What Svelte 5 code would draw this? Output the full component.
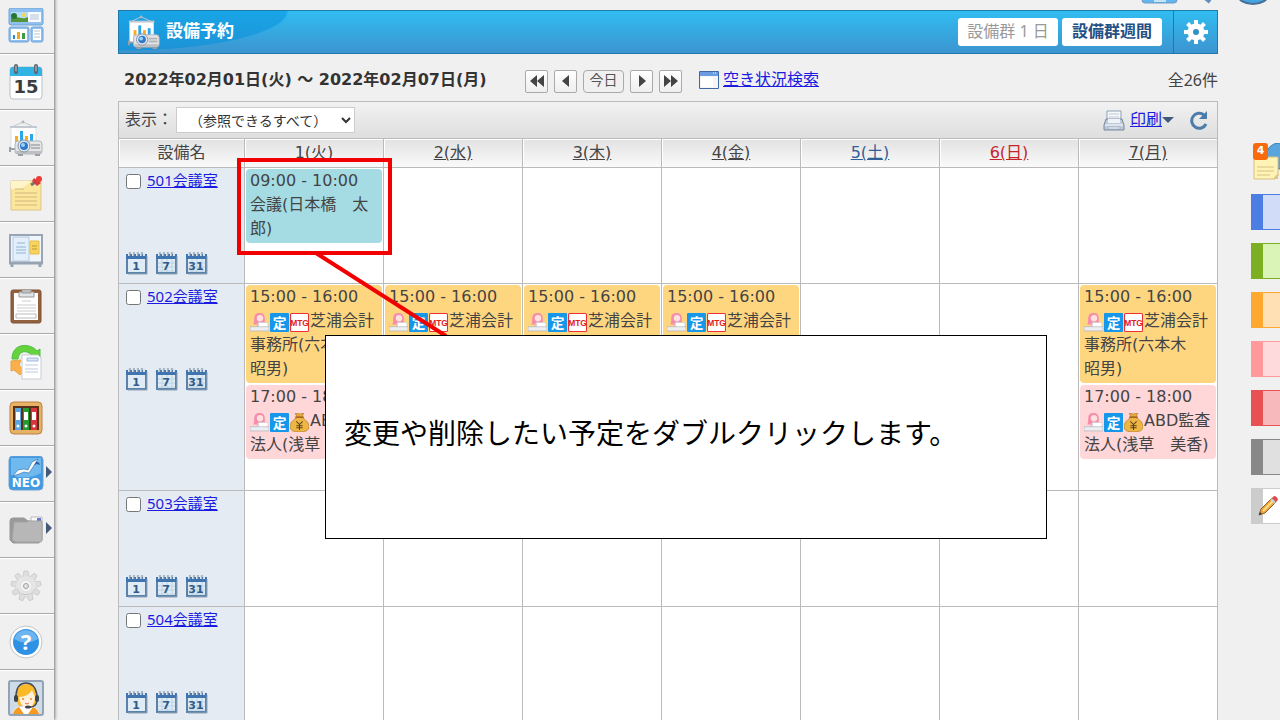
<script>
  const tools = ['portal', 'calendar', 'facility', 'memo', 'board', 'report', 'workflow', 'cabinet', 'neo', 'folder', 'settings', 'help', 'support'];
  const submenus = ['neo', 'folder'];
  const labels = {
    portal: 'ポータル', calendar: 'スケジュール', facility: '設備予約', memo: 'メモ', board: '掲示板', report: 'レポート',
    workflow: 'ワークフロー', cabinet: 'キャビネット', neo: 'NEO', folder: 'フォルダ', settings: '設定', help: 'ヘルプ', support: 'サポート'
  };

  const days = [
    { name: '1(火)' },
    { name: '2(水)' },
    { name: '3(木)' },
    { name: '4(金)' },
    { name: '5(土)', kind: 'saturday' },
    { name: '6(日)', kind: 'sunday' },
    { name: '7(月)' }
  ];

  const single = { time: '09:00 - 10:00', title: '会議(日本橋　太郎)', color: 'teal', icons: [] };
  const office = { time: '15:00 - 16:00', title: '芝浦会計事務所(六本木　昭男)', color: 'orange', icons: ['person', 'fixed', 'mtg'] };
  const audit = { time: '17:00 - 18:00', title: 'ABD監査法人(浅草　美香)', color: 'pink', icons: ['person', 'fixed', 'money'] };

  const rooms = [
    { name: '501会議室', events: { 0: [single] } },
    { name: '502会議室', events: { 0: [office, audit], 1: [office, audit], 2: [office, audit], 3: [office, audit], 6: [office, audit] } },
    { name: '503会議室', events: {} },
    { name: '504会議室', events: {} }
  ];

  const labelColors = ['blue', 'green', 'amber', 'rose', 'red', 'gray'];
</script>

{#snippet projector()}
  <path d="M4 7 15 2l11 5" fill="none" stroke="#c3c8cf"/>
  <circle cx="15" cy="2" r="1.4" fill="#aeb6c0"/>
  <path d="M3 7h25v22H3z" fill="#fff" stroke="#dde0e5"/>
  <path d="M2 7h27" stroke="#c3c9d1" stroke-width="2"/>
  <path d="M7 16h3v10H7z" fill="#f9ac1e"/>
  <path d="M12 11h3v12h-3z" fill="#2ba6e8"/>
  <path d="M17 16h3v6h-3z" fill="#f9ac1e"/>
  <path d="M22 14h3v8h-3z" fill="#2ba6e8"/>
  <path d="M2 27v5m0-3h6" stroke="#9ba1a8" stroke-width="2"/>
  <rect x="7" y="21" width="27" height="13" rx="3" fill="#e4e5e7" stroke="#b0b3b8"/>
  <path d="M8 31h25v1q0 2-3 2H11q-3 0-3-2z" fill="#bdbfc3"/>
  <path d="M10 35h5m12 0h5" stroke="#9b9ea3" stroke-width="2"/>
  <path d="M23 25h9m-9 3h9" stroke="#b3b5b9" stroke-width="2"/>
  <circle cx="16" cy="26" r="6" fill="#e3e8ee" stroke="#8494a8"/>
  <circle cx="16" cy="26" r="4" fill="#2e7ac8"/>
  <circle cx="15" cy="25" r="2" fill="#9dd0f8"/>
{/snippet}

{#snippet toolIcon(name)}
  <svg class="tool-icon" viewBox="0 0 36 36" aria-hidden="true">
    {#if name === 'portal'}
      <rect x="1" y="0" width="34" height="17" rx="2" fill="#8fc0ef" stroke="#6ea5d8"/>
      <path d="M3 4h17v10H3z" fill="#b3dcf7"/><path d="M3 10c5-4 10 3 17-1v5H3z" fill="#559639"/><circle cx="16" cy="7" r="2" fill="#fbd447"/><circle cx="6" cy="8" r="3" fill="#277534"/>
      <path d="M20 4h13v10H20z" fill="#f8fbff"/><path d="M22 7h9m-9 2h9m-9 2h9" stroke="#b5c4d5"/>
      <rect x="1" y="19" width="20" height="15" rx="2" fill="#8fc0ef" stroke="#6ea5d8"/><path d="M3 21h16v11H3z" fill="#fff"/>
      <path d="M5 27h2v4H5z" fill="#3189cf"/><path d="M14 25h3v6h-3z" fill="#3d9b45"/><path d="M9 24h3v7H9z" fill="#f4a921"/>
      <rect x="23" y="19" width="12" height="15" rx="2" fill="#8fc0ef" stroke="#6ea5d8"/><path d="M25 21h8v11h-8z" fill="#fff"/><path d="M26 23h6m-6 3h6m-6 3h6" stroke="#b5c4d5"/>
    {:else if name === 'calendar'}
      <rect x="2" y="3" width="32" height="32" rx="3" fill="#fff" stroke="#b9c2cc"/>
      <path d="M2 12V6q0-3 3-3h26q3 0 3 3v6z" fill="#31b4e3"/>
      <path d="M8 2v6m20-6v6" stroke="#5d646b" stroke-width="4" stroke-linecap="round"/>
      <path d="M8 2v5m20-5v5" stroke="#c5cbd0" stroke-linecap="round"/>
      <text x="18" y="29" class="calendar-number">15</text>
    {:else if name === 'facility'}
      {@render projector()}
    {:else if name === 'memo'}
      <path d="M3 5h30v29H3z" fill="#fbe69b" stroke="#dcc78a"/><path d="M3 5h20l-9 8H3z" fill="#fff5c9"/>
      <path d="M7 13h9m-9 4h22M7 21h22M7 25h22M7 29h22" stroke="#d2b87b"/>
      <path d="m23 9 6-4" stroke="#777" stroke-width="3"/><path d="m26 2 7 5-4 3-5-5z" fill="#d63c38"/><circle cx="31" cy="3" r="3" fill="#ed3b37"/>
    {:else if name === 'board'}
      <rect x="2" y="3" width="32" height="28" fill="#eff5fa" stroke="#98a5b5" stroke-width="2"/>
      <path d="M5 5h16v24H5z" fill="#e3effa" stroke="#b6cadd"/><path d="M9 11h8m-9 4h10m-10 3h10m-10 3h10" stroke="#8fb2d3"/>
      <path d="M22 9h9v13h-9z" fill="#f8d45c" stroke="#e3bf50"/><path d="M24 14h5m-5 3h5" stroke="#b99940"/><path d="M1 31h34M4 31v4m28-4v4" stroke="#98a3b1" stroke-width="3"/>
    {:else if name === 'report'}
      <rect x="3" y="2" width="30" height="33" rx="2" fill="#92613e" stroke="#7d5335"/><path d="M6 5h24v27H6z" fill="#fff"/>
      <path d="M11 4h15v5H11zM14 2h9v3h-9z" fill="#e3e4e8" stroke="#999"/><path d="M14 13h9M9 17h19M9 20h19M9 23h19" stroke="#ccc"/><path d="M8 26h20v4H8z" fill="#fff" stroke="#bbb"/>
    {:else if name === 'workflow'}
      <path d="M4 15C4-2 23-1 29 7l3-2v11H21l4-4C18 5 11 7 10 15z" fill="#64d33c" stroke="#4dbd3d"/>
      <path d="m3 17 10-1-2 5 5 6-4 4-6-5-3 1z" fill="#f9b04a" stroke="#eaa34b"/>
      <path d="M14 11h16l3 3v21H14z" fill="#fff" stroke="#c6ccd4"/><path d="M19 14h11v3H19z" fill="#dce7f3" stroke="#9eb9dc"/><path d="M17 21h13m-13 4h13m-13 3h13" stroke="#bcc9dd"/>
    {:else if name === 'cabinet'}
      <rect x="2" y="2" width="32" height="32" rx="4" fill="#e8b264" stroke="#bb8140"/><path d="M5 6h26v24H5z" fill="#583118"/>
      <path d="M7 8h6v22H7z" fill="#5ba8df"/><path d="M15 8h6v22h-6z" fill="#249b31"/><path d="M23 8h6v22h-6z" fill="#d7373c"/>
      <path d="M8 12h4v8H8zm8 0h4v8h-4zm8 0h4v8h-4z" fill="#fff"/><circle cx="10" cy="26" r="1.500" fill="#fff"/><circle cx="18" cy="26" r="1.500" fill="#fff"/><circle cx="26" cy="26" r="1.500" fill="#fff"/>
    {:else if name === 'neo'}
      <rect x="1" y="0" width="34" height="34" rx="4" fill="#429ae2" stroke="#6fa0cf"/><path d="M3 2h30v15Q18 25 3 19z" fill="#6fb9ef"/>
      <path d="M26 6q5-1 6 3l-3-1-5 2z" fill="#2c5f99"/>
      <path d="m5 20 5-6 6-1 4 1 4-8 6-3-5 8-4 6-5-1-5 2z" fill="#fff" stroke="#2c67a5" stroke-width=".6"/>
      <text x="18" y="31" class="neo-label">NEO</text>
    {:else if name === 'folder'}
      <path d="M2 9q0-3 3-3h11l4 3h10q4 0 4 3v16l-3 3H5l-3-3z" fill="#999" stroke="#999"/><path d="M23 5h11v8H23z" fill="#f9f9ff" stroke="#bbb"/><path d="M29 6h4v3h-4z" fill="#6579ce"/>
      <path d="M6 10h12l4-1h12v19q0 2-2 2H8l-4-2z" fill="#b7b7b7" stroke="#a3a3a3"/>
    {:else if name === 'settings'}
      <g fill="#dedede" stroke="#c0c0c0" stroke-width=".6">
        {#each [0, 40, 80, 120, 160, 200, 240, 280, 320] as angle}
          <path d="m15 9 1-6h4l1 6z" transform="rotate({angle} 18 18)"/>
        {/each}
      </g>
      <circle cx="18" cy="18" r="10" fill="#e6e6e6"/><path d="M9 21a10 10 0 0 0 18 0" fill="none" stroke="#c6c6c6"/>
      <circle cx="18" cy="18" r="6" fill="#f3f3f3" stroke="#ddd"/><circle cx="18" cy="18" r="2.500" fill="#e3e3e3" stroke="#9f9f9f"/>
    {:else if name === 'help'}
      <circle cx="18" cy="18" r="16" fill="#fff" stroke="#c5c5c5"/><circle cx="18" cy="18" r="13" fill="#2f91e3"/><path d="M6 15a12.500 12.500 0 0 1 24 0q-12 7-24 0" fill="#6db5f0"/>
      <text x="18" y="26" class="help-mark">?</text>
    {:else}
      <rect x="1" y="1" width="34" height="34" rx="2" fill="#cfdce8" stroke="#91a3b5" stroke-width="2"/>
      <path d="M5 34q0-7 8-7h10q8 0 8 7z" fill="#fff"/><path d="m11 27 5 7H5q1-5 6-7m14 0-5 7h11q-1-5-6-7" fill="#f69b20"/>
      <path d="M8 20V14Q9 4 19 4t10 11v6l-3 5H11z" fill="#fab927"/>
      <path d="M11 17q9 0 13-7l3 7q0 10-9 11-6-2-7-11" fill="#fff0dc"/>
      <path d="M8 19v-4Q9 3 18 3t11 12v4m0 2q-1 7-9 6" fill="none" stroke="#404a57" stroke-width="1.500"/>
      <rect x="6" y="15" width="4" height="7" rx="2" fill="#3b4451"/><rect x="27" y="15" width="4" height="7" rx="2" fill="#3b4451"/>
      <path d="M15 18v2m8-2v2" stroke="#e98b2f" stroke-width="1.500"/><path d="M17 23q2 2 4 0" fill="none" stroke="#e16a5c"/><ellipse cx="20" cy="27" rx="3" ry="1.500" fill="#3b4451"/>
    {/if}
  </svg>
{/snippet}

{#snippet dateIcon(number)}
  <svg class="date-icon" viewBox="0 0 22 24" aria-hidden="true">
    <path d="M1 4h19v18H1z" fill="#e0ecf5" stroke="#5b82a8" stroke-width="2"/>
    <path d="M0 3h21v5H0z" fill="#3f74ae"/>
    {#if number !== '1'}<path d="M2 12h17M2 16h17M2 20h17M6 8v13m5-13v13m5-13v13" stroke="#bcd2e4"/>{/if}
    <path d="M3 1v4m4-4v4m4-4v4m4-4v4m3-4v4" stroke="#dce5ed" stroke-width="2"/>
    <path d="M4 1v4m4-4v4m4-4v4m4-4v4" stroke="#71879d"/>
    <path d="M21 5v18H2" fill="none" stroke="#8fa3b6"/>
    <text x="10" y="19" class="date-number">{number}</text>
  </svg>
{/snippet}

{#snippet eventIcon(name)}
  <svg class="event-icon" viewBox="0 0 18 18" aria-hidden="true">
    {#if name === 'person'}
      <path d="M3 11q1-1 1-6 0-5 5-5t5 5v6z" fill="#f58dab"/><circle cx="9.500" cy="5" r="3" fill="#ffe2df"/><path d="M6 12q0-3 3-3t4 3" fill="#f7adbd"/>
      <path d="M8 9h9v5H8z" fill="#fff" stroke="#c7cbd0" stroke-width=".6"/><path d="M0 13h18v4H0z" fill="#eceef1" stroke="#a9adb4" stroke-width=".6"/>
    {:else if name === 'fixed'}
      <rect width="18" height="18" rx="1" fill="#1697e9"/><text x="9" y="14" class="fixed-mark">定</text>
    {:else if name === 'mtg'}
      <rect x=".5" y=".5" width="17" height="17" rx="1" fill="#fff" stroke="#ee3030"/><text x="9" y="12" class="mtg-mark">MTG</text>
    {:else}
      <path d="M5 0q4 2 8 0l-2 5H7z" fill="#e7ac3e" stroke="#a66f22" stroke-width=".6"/><path d="M7 4h4q7 4 7 9 0 5-9 5t-9-5q0-5 7-9" fill="#eeb743" stroke="#b57d25" stroke-width=".7"/>
      <path d="M5 4h8" stroke="#a8651e" stroke-width="1.500"/><path d="m6 8 3 3 3-3m-3 3v5m-3-4h6m-6 2h6" fill="none" stroke="#5f4018"/>
    {/if}
  </svg>
{/snippet}

<div class="app">
  <nav class="sidebar" aria-label="メニュー">
    {#each tools as tool}
      <a class="tool" href="#{tool}" aria-label={labels[tool]}>
        {@render toolIcon(tool)}
        {#if submenus.includes(tool)}<span class="submenu-arrow"></span>{/if}
      </a>
    {/each}
  </nav>

  <main>
    <header>
      <svg class="title-icon" viewBox="0 0 36 36" aria-hidden="true">{@render projector()}</svg>
      <h1>設備予約</h1>
      <button class="view">設備群 1 日</button>
      <button class="view current">設備群週間</button>
      <button class="gear" aria-label="設定">
        <svg viewBox="0 0 26 26" aria-hidden="true">
          <path d="M13 1v24M1 13h24M4.500 4.500l17 17m0-17-17 17" stroke="#fff" stroke-width="4"/>
          <circle cx="13" cy="13" r="8.500" fill="#fff"/><circle cx="13" cy="13" r="3" fill="#328fc7"/>
        </svg>
      </button>
    </header>

    <div class="period">
      <h2>2022年02月01日(火) ～ 2022年02月07日(月)</h2>
      <div class="pager">
        <button aria-label="前の週"><svg viewBox="0 0 14 12"><path d="M7 0v12L0 6zm7 0v12L7 6z"/></svg></button>
        <button aria-label="前の日"><svg viewBox="0 0 14 12"><path d="M10 0v12L3 6z"/></svg></button>
        <button class="today">今日</button>
        <button aria-label="次の日"><svg viewBox="0 0 14 12"><path d="M4 0v12l7-6z"/></svg></button>
        <button aria-label="次の週"><svg viewBox="0 0 14 12"><path d="M0 0v12l7-6zm7 0v12l7-6z"/></svg></button>
      </div>
      <svg class="window-icon" viewBox="0 0 20 18" aria-hidden="true">
        <path d="M.5.500h19v17H.500z" fill="#f5f5f5" stroke="#3f69a6"/><path d="M1 1h18v4H1z" fill="#6b9be0"/><path d="M14 2h1m1 0h1" stroke="#fff"/><path d="M2 6h12v10H2z" fill="#fff"/>
      </svg>
      <a href="#search">空き状況検索</a>
      <span class="total">全26件</span>
    </div>

    <section class="schedule">
      <div class="filter">
        <label for="range">表示：</label>
        <select id="range"><option>（参照できるすべて）</option></select>
        <svg class="printer" viewBox="0 0 22 21" aria-hidden="true">
          <path d="M4 11V1h14v10" fill="#f4f8fb" stroke="#8ba0b5"/><path d="M6 4h10M6 7h10" stroke="#c0ccd7"/>
          <path d="M3 9h16l2 6v5H1v-5z" fill="#bccada" stroke="#76899d"/><path d="M5 9h12v4H5z" fill="#eef3f7"/><path d="M2 15h18" stroke="#fff"/><path d="M5 17h12v2H5z" fill="#eef3f7" stroke="#8d9fb1" stroke-width=".6"/>
        </svg>
        <a href="#print">印刷</a>
        <span class="down-arrow"></span>
        <button class="reload" aria-label="更新">
          <svg viewBox="0 0 20 20" aria-hidden="true"><path d="M17 14a7.500 7.500 0 1 1-2-9" fill="none" stroke="#4d7ca9" stroke-width="3"/><path d="M18 1v8h-8z" fill="#4d7ca9"/></svg>
        </button>
      </div>

      <table>
        <thead>
          <tr>
            <th class="room-column">設備名</th>
            {#each days as day}
              <th><a class={day.kind} href="#{day.name}">{day.name}</a></th>
            {/each}
          </tr>
        </thead>
        <tbody>
          {#each rooms as room}
            <tr>
              <td class="room">
                <div class="room-name">
                  <input type="checkbox" aria-label={room.name}>
                  <a href="#{room.name}">{room.name}</a>
                </div>
                <div class="room-views">
                  {#each ['1', '7', '31'] as number}
                    <a href="#view-{number}" aria-label="{number}日表示">{@render dateIcon(number)}</a>
                  {/each}
                </div>
              </td>
              {#each days as day, dayIndex}
                <td class="day">
                  {#each room.events[dayIndex] ?? [] as event}
                    <div class="event {event.color}">
                      <div>{event.time}</div>
                      <div>{#each event.icons as icon}{@render eventIcon(icon)}{/each}{event.title}</div>
                    </div>
                  {/each}
                </td>
              {/each}
            </tr>
          {/each}
        </tbody>
      </table>
    </section>

    <div class="highlight"></div>
    <svg class="pointer" viewBox="0 0 134 84" aria-hidden="true"><path d="m2 1 130 83" stroke="#f20000" stroke-width="4"/></svg>
    <div class="callout">変更や削除したい予定をダブルクリックします。</div>
  </main>

  <aside>
    <svg class="top-icons" viewBox="0 0 140 8" aria-hidden="true">
      <rect x="2" y="-12" width="35" height="15" rx="3" fill="#65b6ec" stroke="#6c9bc6"/><path d="M14-1h12v3H14z" fill="#c5e4f8"/>
      <path d="m63-4 7 6" stroke="#648eb9" stroke-width="4"/><ellipse cx="113" cy="-5" rx="15" ry="9" fill="#43a4df" stroke="#496f98" stroke-width="2"/>
    </svg>
    <button class="notes" aria-label="付箋 4件">
      <svg viewBox="0 0 29 38" aria-hidden="true"><circle cx="28" cy="13" r="13" fill="#5aa5dc" stroke="#3d81c0"/><path d="M3 14h24v19l-3 3H3z" fill="#fff3b6" stroke="#d7bf7e"/><path d="M6 24h17M6 28h17M6 32h13" stroke="#d7c182"/><path d="m22 36 5-6v6z" fill="#dfc780"/></svg>
      <span class="badge">4</span>
    </button>
    {#each labelColors as color}
      <button class="swatch {color}" aria-label={color}></button>
    {/each}
    <button class="swatch pencil" aria-label="編集">
      <svg viewBox="0 0 22 22" aria-hidden="true"><path d="M2 20 4 14 15 3l4 4L8 18z" fill="#eda43d" stroke="#946127"/><path d="m6 16 11-11" stroke="#ffdd83" stroke-width="2"/><path d="m15 3 2-2q3 0 4 4l-2 2z" fill="#df4c51"/><path d="m14 4 4 4" stroke="#c7ced4" stroke-width="2"/><path d="m2 20 1-3 2 2z" fill="#333"/></svg>
    </button>
  </aside>
</div>

<style>
:global(body) {
  background: #f0f0f0;
}
.app {
  display: flex;
  height: 100vh;
  overflow: hidden;
  color: #444;
  font: 16px/24px "DejaVu Sans", "Noto Sans CJK JP", sans-serif;
}
button {
  padding: 0;
  cursor: pointer;
}
a {
  color: #1c1ce0;
}
.sidebar {
  flex: none;
  width: 54px;
  margin-top: -2px;
  background: #f0f0f0;
  box-shadow: 1px 0 3px #777;
}
.tool {
  position: relative;
  display: flex;
  align-items: center;
  justify-content: center;
  box-sizing: border-box;
  height: 56px;
  padding-right: 2px;
  border-bottom: 1px solid #aaa;
  box-shadow: inset 0 1px #fff;
}
.tool-icon {
  width: 36px;
  height: 36px;
}
.calendar-number {
  font: bold 18px "DejaVu Sans", sans-serif;
  text-anchor: middle;
  fill: #3c3c3c;
}
.neo-label {
  font: bold 12px "DejaVu Sans", sans-serif;
  text-anchor: middle;
  fill: #fff;
}
.help-mark {
  font: bold 22px "Noto Sans", sans-serif;
  text-anchor: middle;
  fill: #fff;
}
.submenu-arrow {
  position: absolute;
  right: 2px;
  top: 20px;
  border: 6px solid transparent;
  border-left-color: #44587a;
  border-right-width: 0;
}
main {
  position: relative;
  flex: 1;
  min-width: 0;
  padding: 10px 32px 0 64px;
}
header {
  display: flex;
  align-items: center;
  box-sizing: border-box;
  height: 44px;
  padding-left: 8px;
  border: 1px solid #2179aa;
  background: radial-gradient(ellipse 170px 40px at 0 0, rgba(0, 142, 220, .5) 98%, transparent 100%), linear-gradient(#30bdf2, #3c94cf);
}
.title-icon {
  width: 34px;
  height: 36px;
}
h1 {
  flex: 1;
  margin: 0 0 2px 5px;
  color: #fff;
  font-size: 17px;
  line-height: 24px;
}
.view {
  width: 100px;
  height: 28px;
  margin-right: 4px;
  padding-bottom: 3px;
  border: 0;
  border-radius: 3px;
  background: #fff;
  color: #999;
  font: 16px/24px "Noto Sans", "Noto Sans CJK JP", sans-serif;
}
.view.current {
  margin-right: 11px;
  color: #245083;
  font-weight: bold;
}
.gear {
  width: 44px;
  height: 42px;
  border: 0;
  border-left: 1px solid #2179aa;
  background: none;
}
.gear svg {
  display: block;
  width: 26px;
  height: 26px;
  margin: 0 auto;
}
.period {
  display: flex;
  align-items: center;
  height: 47px;
  padding-top: 5px;
  box-sizing: border-box;
}
h2 {
  width: 395px;
  margin: 0 0 0 6px;
  color: #333;
  font-size: 16px;
  line-height: 24px;
  white-space: nowrap;
}
.pager {
  display: flex;
  gap: 6px;
  margin: 2px 17px 0 6px;
}
.pager button {
  display: flex;
  align-items: center;
  justify-content: center;
  box-sizing: border-box;
  width: 23px;
  height: 23px;
  border: 1px solid #aaa;
  border-radius: 2px;
  background: linear-gradient(#fff, #eee);
}
.pager svg {
  width: 14px;
  height: 12px;
  fill: #444;
}
.pager .today {
  width: 41px;
  padding-bottom: 4px;
  border-radius: 4px;
  background: #f0f0f0;
  color: #555;
  font: 14px/20px "Noto Sans CJK JP", sans-serif;
}
.window-icon {
  width: 20px;
  height: 18px;
  margin-right: 4px;
}
.total {
  margin-left: auto;
  font-family: "Noto Sans", "Noto Sans CJK JP", sans-serif;
}
.filter {
  display: flex;
  align-items: center;
  box-sizing: border-box;
  height: 37px;
  padding: 0 8px 0 6px;
  border: 1px solid #bbb;
  border-bottom: 0;
  background: linear-gradient(#f2f2f2, #dedede);
}
select {
  width: 179px;
  height: 26px;
  margin: 0 auto 0 3px;
  padding: 0 2px 0 8px;
  border: 1px solid #ccc;
  background: #fff;
  color: #333;
  font: 14px "Noto Sans CJK JP", sans-serif;
}
.printer {
  width: 22px;
  height: 21px;
  margin-right: 5px;
}
.down-arrow {
  border: 6px solid transparent;
  border-top-color: #44587a;
  border-bottom-width: 0;
}
.reload {
  height: 20px;
  margin-left: 15px;
  border: 0;
  background: none;
}
.reload svg {
  display: block;
  width: 20px;
  height: 20px;
}
table {
  width: 100%;
  border-collapse: collapse;
  table-layout: fixed;
}
th,
td {
  border: 1px solid #bbb;
}
th {
  height: 28px;
  padding: 0;
  background: linear-gradient(#e2e2e2, #fafafa);
  box-shadow: inset 1px 1px #fff;
  font-weight: normal;
}
th a {
  color: #444;
}
.saturday {
  color: #315e97;
}
.sunday {
  color: #c5242b;
}
.room-column {
  width: 125px;
}
td {
  padding: 0;
  vertical-align: top;
}
.room {
  padding: 0 7px 8px;
  background: #e4ebf2;
}
.room-name {
  display: flex;
  align-items: center;
  gap: 6px;
  font: 15px/24px "Noto Sans", "Noto Sans CJK JP", sans-serif;
}
.room-name input {
  width: 15px;
  height: 15px;
  margin: 3px 0 0;
}
.room-views {
  display: flex;
  gap: 8px;
  margin-top: 59px;
}
.room-views a {
  height: 24px;
}
.date-icon {
  width: 22px;
  height: 24px;
}
.date-number {
  font: bold 11px "DejaVu Sans", sans-serif;
  text-anchor: middle;
  fill: #315c88;
}
.day {
  padding: 1px 1px 0;
  background: #fff;
}
.day:has(.pink) {
  padding-bottom: 29px;
}
.event {
  margin-bottom: 2px;
  padding: 0 2px 2px 4px;
  border-radius: 4px;
}
.teal {
  background: #a5dce4;
}
.orange {
  background: #ffd680;
}
.pink {
  background: #ffd7d9;
}
.event-icon {
  width: 19px;
  height: 19px;
  margin-right: 1px;
  vertical-align: -6px;
}
.fixed-mark {
  font: bold 13px "Noto Sans CJK JP", sans-serif;
  text-anchor: middle;
  fill: #fff;
}
.mtg-mark {
  font: bold 8px "Liberation Sans", sans-serif;
  text-anchor: middle;
  fill: #e02020;
}
.highlight {
  position: absolute;
  left: 183px;
  top: 158px;
  box-sizing: border-box;
  width: 155px;
  height: 97px;
  border: 4px solid #f20000;
}
.pointer {
  position: absolute;
  left: 260px;
  top: 252px;
  width: 134px;
  height: 84px;
}
.callout {
  position: absolute;
  left: 271px;
  top: 335px;
  display: flex;
  align-items: center;
  box-sizing: border-box;
  width: 722px;
  height: 204px;
  padding: 0 18px 4px;
  border: 1px solid #000;
  background: #fff;
  color: #000;
  font-size: 28px;
  line-height: 40px;
}
aside {
  position: relative;
  display: flex;
  flex: none;
  flex-direction: column;
  gap: 13px;
  width: 30px;
  padding-top: 143px;
}
.top-icons {
  position: absolute;
  right: 0;
  top: 0;
  width: 140px;
  height: 8px;
}
.notes {
  position: relative;
  height: 38px;
  border: 0;
  background: none;
}
.notes svg {
  display: block;
  width: 29px;
  height: 38px;
  margin-left: 1px;
}
.badge {
  position: absolute;
  left: 3px;
  top: 0;
  width: 15px;
  height: 17px;
  border-radius: 3px;
  background: #f86a0b;
  color: #fff;
  font: bold 11px/16px "DejaVu Sans", sans-serif;
}
.swatch {
  flex: none;
  box-sizing: border-box;
  height: 36px;
  margin-left: 1px;
  border: 1px solid;
  border-width: 1px 0 1px 12px;
}
.blue {
  border-color: #4b7de3;
  background: #d1ddf8;
}
.green {
  border-color: #7cb022;
  background: #daf4b8;
}
.amber {
  border-color: #fda92f;
  background: #ffe0b5;
}
.rose {
  border-color: #ff999c;
  background: #ffdadd;
}
.red {
  border-color: #e95053;
  background: #f7b9bb;
}
.gray {
  border-color: #888;
  background: #e0e0e0;
}
.pencil {
  border-color: #ccc;
  background: #fff;
}
.pencil svg {
  display: block;
  width: 22px;
  height: 22px;
  margin-left: -6px;
}
</style>
